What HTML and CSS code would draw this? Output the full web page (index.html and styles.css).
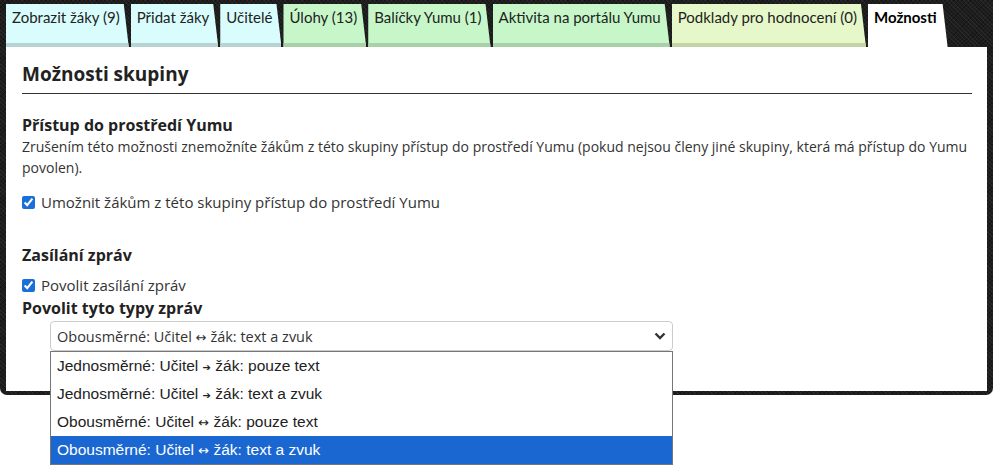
FILE: index.html
```html
<!DOCTYPE html>
<html lang="cs">
<head>
    <meta charset="UTF-8">
    <title>Možnosti skupiny</title>
    <link rel="stylesheet" href="styles.css">
</head>
<body>
    <div class="frame">

        <div class="tabs">
            <div class="tab cyan">Zobrazit žáky (9)</div>
            <div class="tab cyan">Přidat žáky</div>
            <div class="tab cyan">Učitelé</div>
            <div class="tab green">Úlohy (13)</div>
            <div class="tab green">Balíčky Yumu (1)</div>
            <div class="tab green">Aktivita na portálu Yumu</div>
            <div class="tab lime">Podklady pro hodnocení (0)</div>
            <div class="tab active">Možnosti</div>
        </div>

        <div class="panel">
            <h1>Možnosti skupiny</h1>

            <h2>Přístup do prostředí Yumu</h2>
            <p class="desc">
                Zrušením této možnosti znemožníte žákům z této skupiny přístup do prostředí Yumu (pokud nejsou členy jiné skupiny, která má přístup do Yumu povolen).
            </p>
            <label class="check">
                <input type="checkbox" checked> Umožnit žákům z této skupiny přístup do prostředí Yumu
            </label>

            <h2 class="gap">Zasílání zpráv</h2>
            <label class="check">
                <input type="checkbox" checked> Povolit zasílání zpráv
            </label>
            <h2 class="sub">Povolit tyto typy zpráv</h2>

            <!-- rozbalený select -->
            <div class="select-wrap">
                <div class="select">
                    <span>Obousměrné: Učitel <span class="larr">↔</span> žák: text a zvuk</span>
                    <svg width="12" height="8" viewBox="0 0 12 8">
                        <path d="M1.5 1.5 L6 6 L10.5 1.5" fill="none" stroke="#333" stroke-width="2.4"/>
                    </svg>
                </div>
                <div class="options">
                    <div class="option">Jednosměrné: Učitel <span class="arr">➔</span> žák: pouze text</div>
                    <div class="option">Jednosměrné: Učitel <span class="arr">➔</span> žák: text a zvuk</div>
                    <div class="option">Obousměrné: Učitel <span class="larr">↔</span> žák: pouze text</div>
                    <div class="option selected">Obousměrné: Učitel <span class="larr">↔</span> žák: text a zvuk</div>
                </div>
            </div>
        </div>
    </div>
</body>
</html>
```

FILE: styles.css
```css
html, body{
    min-height: 471px;
}

body{
    margin: 0;
    background: #fff;
    font-family: "Open Sans", "Liberation Sans", sans-serif;
    color: #333;
}

.frame{
    width: 987px;
    height: 391px;
    padding: 4px 0 0 6px;
    border-radius: 0 0 7px 7px;
    background-color: #1d1d1d;
    background-image:
        repeating-linear-gradient(45deg, rgba(255,255,255,0.05) 0 1px, transparent 1px 3px),
        repeating-linear-gradient(-45deg, rgba(0,0,0,0.25) 0 1px, transparent 1px 3px);
}

.tabs{
    display: flex;
    gap: 2px;
    height: 43px;
}

.tab{
    height: 43px;
    box-sizing: border-box;
    padding: 4px 9px 0 6px;
    font-family: "Lato", "Open Sans", sans-serif;
    font-size: 15px;
    color: #222;
    clip-path: polygon(0 0, calc(100% - 5px) 0, 100% 100%, 0 100%);
}

.cyan{
    background: #d9fdfd;
    box-shadow: inset 0 -4px 0 #b7d3d3;
}

.green{
    background: #c7f7c9;
    box-shadow: inset 0 -4px 0 #a8d0a9;
}

.lime{
    background: #e6f8c9;
    box-shadow: inset 0 -4px 0 #c4d3a8;
}

.active{
    background: #fff;
    font-weight: bold;
    color: #000;
    padding-right: 11px;
}

.panel{
    position: relative;
    background: #fff;
    width: 981px;
    height: 344px;
    box-sizing: border-box;
    padding: 14px 15px 0 16px;
}

h1{
    margin: 0;
    padding-bottom: 6px;
    border-bottom: 1px solid #333;
    font-size: 19px;
    color: #222;
}

h2{
    margin: 20px 0 0;
    font-size: 16px;
    color: #222;
}

h2.gap{
    margin-top: 32px;
}

h2.sub{
    margin-top: 2px;
}

.desc{
    margin: 0;
    font-size: 14px;
    line-height: 21px;
}

.check{
    display: flex;
    align-items: center;
    margin-top: 14px;
    font-size: 15px;
}

h2.gap + .check{
    margin-top: 9px;
}

.check input{
    width: 13px;
    height: 13px;
    margin: 0 6px 0 0;
    accent-color: #1a6fd8;
}

.select-wrap{
    position: relative;
    margin: 2px 0 0 28px;
    width: 623px;
}

.select{
    height: 30px;
    box-sizing: border-box;
    border: 1px solid #ccc;
    border-radius: 4px;
    padding: 0 6px;
    display: flex;
    align-items: center;
    justify-content: space-between;
    font-size: 14.5px;
}

.larr{
    font-family: "DejaVu Sans", sans-serif;
    font-size: 13px;
}

/* rozbalená nabídka leží přes spodní okraj panelu */
.options{
    position: absolute;
    left: 0;
    top: 30px;
    width: 623px;
    box-sizing: border-box;
    border: 1px solid #767676;
    background: #fff;
    z-index: 2;
}

.option{
    height: 28px;
    line-height: 28px;
    padding-left: 6px;
    font-family: "Liberation Sans", Arial, sans-serif;
    font-size: 15.5px;
    color: #222;
}

.arr{
    font-family: "DejaVu Sans", sans-serif;
    font-size: 10px;
}

.selected{
    background: #1a67d2;
    color: #fff;
}
```
